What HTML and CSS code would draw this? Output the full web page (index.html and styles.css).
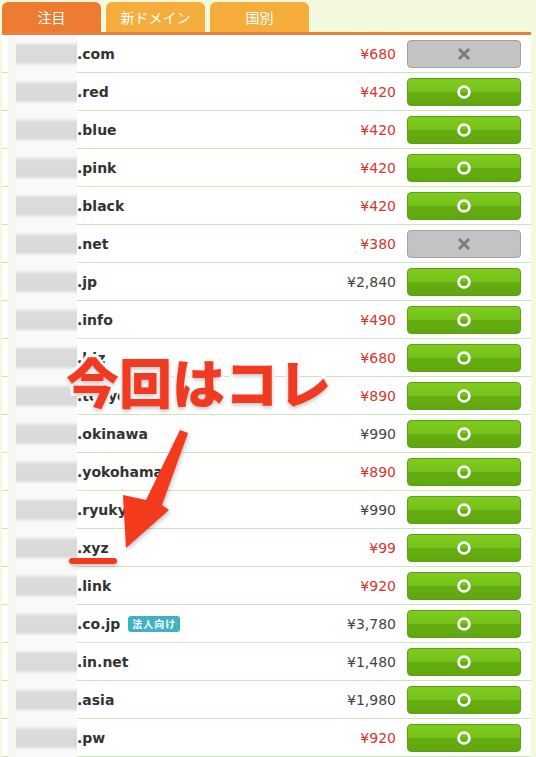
FILE: index.html
```html
<!DOCTYPE html>
<html lang="ja">
<head>
    <meta charset="UTF-8">
    <meta name="viewport" content="width=device-width, initial-scale=1.0">
    <title>ドメイン一覧</title>
    <link rel="stylesheet" href="styles.css">
</head>
<body>
    <div class="wrap">
        <div class="tabs">
            <div class="tab active">注目</div>
            <div class="tab">新ドメイン</div>
            <div class="tab">国別</div>
        </div>

        <div class="list">
            <div class="row"><span class="edge"></span><span class="mask"></span><div class="cells"><span class="domain">.com</span><span class="price red">¥680</span><span class="btn off"><svg width="16" height="16" viewBox="-8 -8 16 16"><path d="M-5-5L5 5M5-5L-5 5"/></svg></span></div></div>
            <div class="row"><span class="edge"></span><span class="mask"></span><div class="cells"><span class="domain">.red</span><span class="price red">¥420</span><span class="btn ok"><svg width="16" height="16" viewBox="-8 -8 16 16"><circle r="5.4"/></svg></span></div></div>
            <div class="row"><span class="edge"></span><span class="mask"></span><div class="cells"><span class="domain">.blue</span><span class="price red">¥420</span><span class="btn ok"><svg width="16" height="16" viewBox="-8 -8 16 16"><circle r="5.4"/></svg></span></div></div>
            <div class="row"><span class="edge"></span><span class="mask"></span><div class="cells"><span class="domain">.pink</span><span class="price red">¥420</span><span class="btn ok"><svg width="16" height="16" viewBox="-8 -8 16 16"><circle r="5.4"/></svg></span></div></div>
            <div class="row"><span class="edge"></span><span class="mask"></span><div class="cells"><span class="domain">.black</span><span class="price red">¥420</span><span class="btn ok"><svg width="16" height="16" viewBox="-8 -8 16 16"><circle r="5.4"/></svg></span></div></div>
            <div class="row"><span class="edge"></span><span class="mask"></span><div class="cells"><span class="domain">.net</span><span class="price red">¥380</span><span class="btn off"><svg width="16" height="16" viewBox="-8 -8 16 16"><path d="M-5-5L5 5M5-5L-5 5"/></svg></span></div></div>
            <div class="row"><span class="edge"></span><span class="mask"></span><div class="cells"><span class="domain">.jp</span><span class="price">¥2,840</span><span class="btn ok"><svg width="16" height="16" viewBox="-8 -8 16 16"><circle r="5.4"/></svg></span></div></div>
            <div class="row"><span class="edge"></span><span class="mask"></span><div class="cells"><span class="domain">.info</span><span class="price red">¥490</span><span class="btn ok"><svg width="16" height="16" viewBox="-8 -8 16 16"><circle r="5.4"/></svg></span></div></div>
            <div class="row"><span class="edge"></span><span class="mask"></span><div class="cells"><span class="domain">.biz</span><span class="price red">¥680</span><span class="btn ok"><svg width="16" height="16" viewBox="-8 -8 16 16"><circle r="5.4"/></svg></span></div></div>
            <div class="row"><span class="edge"></span><span class="mask"></span><div class="cells"><span class="domain">.tokyo</span><span class="price red">¥890</span><span class="btn ok"><svg width="16" height="16" viewBox="-8 -8 16 16"><circle r="5.4"/></svg></span></div></div>
            <div class="row"><span class="edge"></span><span class="mask"></span><div class="cells"><span class="domain">.okinawa</span><span class="price">¥990</span><span class="btn ok"><svg width="16" height="16" viewBox="-8 -8 16 16"><circle r="5.4"/></svg></span></div></div>
            <div class="row"><span class="edge"></span><span class="mask"></span><div class="cells"><span class="domain">.yokohama</span><span class="price red">¥890</span><span class="btn ok"><svg width="16" height="16" viewBox="-8 -8 16 16"><circle r="5.4"/></svg></span></div></div>
            <div class="row"><span class="edge"></span><span class="mask"></span><div class="cells"><span class="domain">.ryukyu</span><span class="price">¥990</span><span class="btn ok"><svg width="16" height="16" viewBox="-8 -8 16 16"><circle r="5.4"/></svg></span></div></div>
            <div class="row"><span class="edge"></span><span class="mask"></span><div class="cells"><span class="domain">.xyz</span><span class="price red">¥99</span><span class="btn ok"><svg width="16" height="16" viewBox="-8 -8 16 16"><circle r="5.4"/></svg></span></div></div>
            <div class="row"><span class="edge"></span><span class="mask"></span><div class="cells"><span class="domain">.link</span><span class="price red">¥920</span><span class="btn ok"><svg width="16" height="16" viewBox="-8 -8 16 16"><circle r="5.4"/></svg></span></div></div>
            <div class="row"><span class="edge"></span><span class="mask"></span><div class="cells"><span class="domain">.co.jp <span class="badge">法人向け</span></span><span class="price">¥3,780</span><span class="btn ok"><svg width="16" height="16" viewBox="-8 -8 16 16"><circle r="5.4"/></svg></span></div></div>
            <div class="row"><span class="edge"></span><span class="mask"></span><div class="cells"><span class="domain">.in.net</span><span class="price">¥1,480</span><span class="btn ok"><svg width="16" height="16" viewBox="-8 -8 16 16"><circle r="5.4"/></svg></span></div></div>
            <div class="row"><span class="edge"></span><span class="mask"></span><div class="cells"><span class="domain">.asia</span><span class="price">¥1,980</span><span class="btn ok"><svg width="16" height="16" viewBox="-8 -8 16 16"><circle r="5.4"/></svg></span></div></div>
            <div class="row"><span class="edge"></span><span class="mask"></span><div class="cells"><span class="domain">.pw</span><span class="price red">¥920</span><span class="btn ok"><svg width="16" height="16" viewBox="-8 -8 16 16"><circle r="5.4"/></svg></span></div></div>

            <!-- 注釈 -->
            <div class="note">今回はコレ</div>
            <svg class="arrow" width="529" height="722" viewBox="2 35 529 722">
                <polygon points="180,430 188,433 162,505 169,510 126,548 123,495 146,500"/>
                <rect x="69" y="558" width="48" height="6" rx="3"/>
            </svg>
        </div>
    </div>
</body>
</html>
```
FILE: styles.css
```css
body {
    margin: 0;
    background-color: #f3f9dd;
    font-family: "DejaVu Sans", Verdana, sans-serif;
}
.wrap {
    padding: 2px 5px 0 2px;
}
.tabs {
    display: flex;
    gap: 5px;
}
.tab {
    width: 99px;
    height: 30px;
    line-height: 30px;
    text-align: center;
    color: #fff;
    font-family: "Noto Sans CJK JP", sans-serif;
    font-size: 14px;
    background-color: #f5ad3b;
    border-radius: 6px 6px 0 0;
}
.tab.active {
    background-color: #ed7b32;
}
.list {
    position: relative;
    background-color: #fff;
    border-top: 3px solid #e8813a;
}
.row {
    display: flex;
    height: 38px;
}
.edge {
    width: 6px;
    border-bottom: 1px solid #cbe7b8;
}
/* ぼかし部分 */
.mask {
    width: 69px;
    background:
        linear-gradient(to right, #f5f6f1 8px, rgba(255,255,255,0) 8px),
        linear-gradient(to bottom, #f9f9f9 7px, #dcdcdc 11px, #d9d9d9 27px, #f9f9f9 31px);
}
.cells {
    flex: 1;
    display: flex;
    align-items: center;
    border-bottom: 1px solid #cbe7b8;
}
.domain {
    flex: 1;
    font-weight: 700;
    font-size: 14px;
    color: #333;
}
.badge {
    display: inline-block;
    margin-left: 3px;
    padding: 0 4px;
    height: 16px;
    line-height: 16px;
    vertical-align: 1px;
    background-color: #42b1c4;
    color: #fff;
    border-radius: 3px;
    font-family: "Noto Sans CJK JP", sans-serif;
    font-size: 10px;
    font-weight: 700;
    letter-spacing: 1px;
}
.price {
    font-size: 14px;
    color: #444;
    margin-right: 11px;
}
.price.red {
    color: #d8352c;
}
.btn {
    width: 112px;
    height: 26px;
    margin-right: 10px;
    border-radius: 4px;
    display: flex;
    align-items: center;
    justify-content: center;
}
.btn.ok {
    background: linear-gradient(to bottom, #7fcb1f 0%, #74c219 50%, #65ae11 50%, #5fa70e 100%);
    border: 1px solid #5d9e12;
}
.btn.ok circle {
    fill: none;
    stroke: #fff;
    stroke-width: 2.8;
}
.btn.off {
    background-color: #c3c3c3;
    border: 1px solid #a3a3a3;
}
.btn.off path {
    stroke: #7b7b7b;
    stroke-width: 3;
    fill: none;
}
.note {
    position: absolute;
    left: 64px;
    top: 320px;
    font-family: "Noto Sans CJK JP", sans-serif;
    font-size: 53px;
    font-weight: 900;
    line-height: 1;
    color: #f03a22;
    -webkit-text-stroke: 6px #fff;
    paint-order: stroke fill;
    text-shadow: 0 2px 4px rgba(0, 0, 0, 0.25);
}
.arrow {
    position: absolute;
    left: 0;
    top: 0;
    fill: #f43a1c;
    filter: drop-shadow(1px 2px 2px rgba(0, 0, 0, 0.25));
}
```
